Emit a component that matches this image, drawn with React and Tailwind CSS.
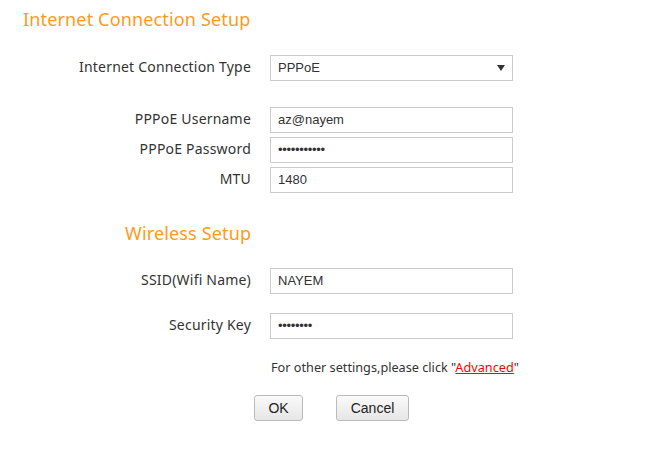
export default function App() {
  const label = 'w-[251px] text-right text-[14px] leading-[20px] pb-[3px] tracking-[0.2px] text-[#333]'
  const input = 'w-[243px] h-[26px] border border-[#ccc] bg-white px-[7px] text-[13px] text-[#333] font-["Liberation_Sans",Arial,sans-serif] flex items-center'

  const Row = ({ name, children, className = '' }) => (
    <div className={`flex items-center gap-[19px] ${className}`}>
      <div className={label}>{name}</div>
      {children}
    </div>
  )

  return (
    <div className="w-[645px] h-[453px] bg-white font-['Noto_Sans',sans-serif] text-[#333]">
      <h1 className="pl-[23px] pt-[5px] text-[18px] tracking-[0.15px] leading-[28px] text-[#ff9a1a] font-normal">
        Internet Connection Setup
      </h1>

      <Row name="Internet Connection Type" className="mt-[22px]">
        <div className={`${input} justify-between pr-[7px]`}>
          <span>PPPoE</span>
          <svg width="8" height="6" viewBox="0 0 8 6"><path d="M0 0h8L4 6z" fill="#333" /></svg>
        </div>
      </Row>

      <div className="mt-[26px] flex flex-col gap-[4px]">
        <Row name="PPPoE Username"><div className={input}>az@nayem</div></Row>
        <Row name="PPPoE Password"><div className={`${input} tracking-[-0.3px]`}>•••••••••••</div></Row>
        <Row name="MTU"><div className={input}>1480</div></Row>
      </div>

      <h2 className="pl-[125px] mt-[26px] text-[18px] tracking-[0.15px] leading-[28px] text-[#ff9a1a] font-normal">
        Wireless Setup
      </h2>

      <Row name="SSID(Wifi Name)" className="mt-[21px]">
        <div className={input}>NAYEM</div>
      </Row>
      <Row name="Security Key" className="mt-[19px]">
        <div className={`${input} tracking-[-0.3px]`}>••••••••</div>
      </Row>

      <p className="pl-[271px] mt-[20px] text-[12.7px] leading-[16px] text-[#333]">
        For other settings,please click "<a className="text-[#f00] underline">Advanced</a>"
      </p>

      <div className="flex mt-[20px] pl-[254px] gap-[33px] font-['Liberation_Sans',Arial,sans-serif]">
        <button className="w-[49px] h-[26px] border border-[#bbb] rounded-[3px] bg-gradient-to-b from-[#fafafa] to-[#e6e6e6] text-[14px] text-[#222]">OK</button>
        <button className="w-[73px] h-[26px] border border-[#bbb] rounded-[3px] bg-gradient-to-b from-[#fafafa] to-[#e6e6e6] text-[14px] text-[#222]">Cancel</button>
      </div>
    </div>
  )
}
